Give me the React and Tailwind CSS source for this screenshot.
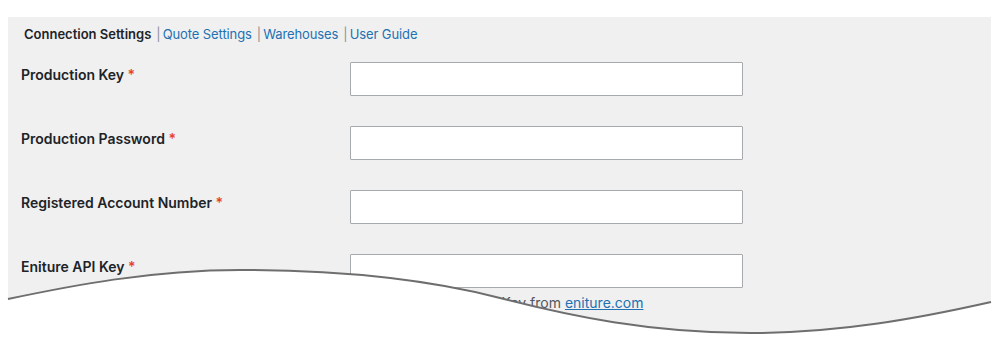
import React from 'react'

const fields = [
  'Production Key',
  'Production Password',
  'Registered Account Number',
  'Eniture API Key',
]

function Tabs() {
  return (
    <div className="flex items-center text-[13px] leading-5 pl-[16px]">
      <span className="font-semibold text-[#1d2327]">Connection Settings</span>
      <span className="ml-[5px] mr-[2px] text-[#8c8f94]">|</span>
      <a href="#" className="text-[#2271b1] tracking-[-0.1px]">Quote Settings</a>
      <span className="ml-[5px] mr-[2px] text-[#8c8f94]">|</span>
      <a href="#" className="text-[#2271b1] tracking-[-0.1px]">Warehouses</a>
      <span className="ml-[5px] mr-[2px] text-[#8c8f94]">|</span>
      <a href="#" className="text-[#2271b1] tracking-[-0.1px]">User Guide</a>
    </div>
  )
}

function Row({ label, last }) {
  return (
    <div className={last ? 'flex items-start' : 'flex items-start mb-[30px]'}>
      <label className="w-[329px] pt-[4px] text-[14px] leading-[18px] font-semibold text-[#1d2327]">
        {label} <span className="text-[#e6402a]">*</span>
      </label>
      <div className="flex flex-col">
        <input
          type="text"
          className="w-[393px] h-[34px] bg-white border border-[#a7aaad] rounded-[1px] px-2 text-[14px] outline-none"
        />
        {last && (
          <p className="mt-[5px] ml-[16px] text-[14px] leading-5 text-[#50575e]">
            Obtain a Eniture API Key from{' '}
            <a href="#" className="text-[#2271b1] underline">eniture.com</a>
          </p>
        )}
      </div>
    </div>
  )
}

export default function App() {
  return (
    <div
      className="relative w-[1000px] h-[355px] bg-white overflow-hidden"
      style={{ fontFamily: 'Inter, "Noto Sans", "Liberation Sans", sans-serif' }}
    >
      <div className="ml-[8px] mt-[17px] w-[983px] h-[338px] bg-[#f0f0f1] pt-[7px]">
        <Tabs />
        <div className="pl-[13px] mt-[18px]">
          {fields.map((f, i) => (
            <Row key={f} label={f} last={i === fields.length - 1} />
          ))}
        </div>
      </div>

      {/* torn-edge wave over the bottom */}
      <svg className="absolute left-0 top-0" width="1000" height="355" viewBox="0 0 1000 355">
        <path
          d="M8 299 C 70 286, 150 270, 240 270 C 340 270, 430 280, 500 298 C 570 316, 650 333, 750 333 C 840 333, 920 318, 991 302 L1000 302 L1000 355 L0 355 L0 299 Z"
          fill="#ffffff"
        />
        <path
          d="M8 299 C 70 286, 150 270, 240 270 C 340 270, 430 280, 500 298 C 570 316, 650 333, 750 333 C 840 333, 920 318, 991 302"
          fill="none"
          stroke="#6e6e6e"
          strokeWidth="2"
        />
      </svg>
    </div>
  )
}
